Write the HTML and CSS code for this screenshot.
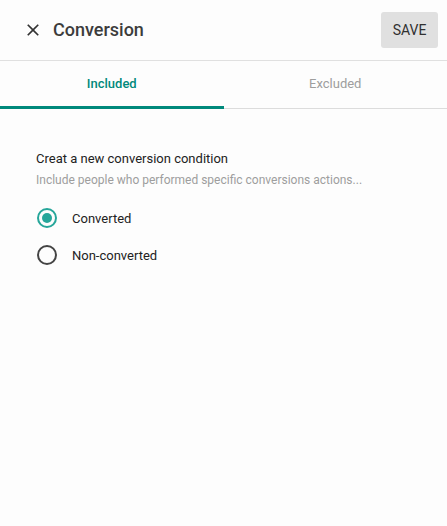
FILE: index.html
```html
<!DOCTYPE html>
<html>
<head>
<meta charset="utf-8">
<link rel="stylesheet" href="styles.css">
</head>
<body>
<div class="app">
  <header class="header">
    <button class="close" aria-label="Close">
      <svg viewBox="0 0 24 24" width="20" height="20"><path d="M19 6.41L17.59 5 12 10.59 6.41 5 5 6.41 10.59 12 5 17.59 6.41 19 12 13.41 17.59 19 19 17.59 13.41 12z" fill="#333"/></svg>
    </button>
    <h1 class="title">Conversion</h1>
    <button class="save">SAVE</button>
  </header>
  <nav class="tabs">
    <div class="tab active">Included</div>
    <div class="tab">Excluded</div>
  </nav>
  <main class="content">
    <div class="heading">Creat a new conversion condition</div>
    <div class="sub">Include people who performed specific conversions actions...</div>
    <div class="radios">
      <label class="radio checked"><span class="circle"></span><span class="label">Converted</span></label>
      <label class="radio"><span class="circle"></span><span class="label">Non-converted</span></label>
    </div>
  </main>
</div>
</body>
</html>
```

FILE: styles.css
```css
html, body {
  margin: 0;
  padding: 0;
  background: #fdfdfd;
  font-family: Roboto, "Liberation Sans", Arial, sans-serif;
}
.app {
  width: 447px;
  height: 526px;
  background: #fdfdfd;
}
.header {
  height: 60px;
  border-bottom: 1px solid #e0e0e0;
  display: flex;
  align-items: center;
  padding: 0 9px 0 23px;
  box-sizing: content-box;
}
.close {
  width: 20px;
  height: 20px;
  padding: 0;
  border: 0;
  background: none;
  display: flex;
  align-items: center;
  justify-content: center;
}
.title {
  margin: 0 0 0 10px;
  font-size: 18px;
  font-weight: 500;
  color: #3c3c3c;
  flex: 1;
  position: relative;
  top: -1px;
}
.save {
  width: 57px;
  height: 36px;
  border: 0;
  border-radius: 3px;
  background: #e0e0e0;
  color: #303030;
  font-family: Roboto, "Liberation Sans", Arial, sans-serif;
  font-size: 14px;
  font-weight: 400;
  padding: 0;
  margin-top: -1px;
}
.tabs {
  display: flex;
  height: 47px;
  border-bottom: 1px solid #dcdcdc;
}
.tab {
  flex: 1;
  display: flex;
  align-items: center;
  justify-content: center;
  font-size: 13px;
  font-weight: 400;
  color: #9e9e9e;
  position: relative;
  padding-bottom: 2px;
}
.tab.active {
  color: #00897b;
  font-weight: 500;
}
.tab.active::after {
  content: "";
  position: absolute;
  left: 0;
  right: 0;
  bottom: -1px;
  height: 3px;
  background: #00897b;
}
.content {
  padding: 42px 36px 0;
}
.heading {
  font-size: 13px;
  color: #222;
  line-height: 16px;
}
.sub {
  font-size: 12px;
  color: #9e9e9e;
  line-height: 16px;
  margin-top: 5px;
}
.radios {
  display: flex;
  flex-direction: column;
  gap: 17px;
  margin-top: 20px;
}
.radio {
  display: flex;
  align-items: center;
  height: 20px;
}
.circle {
  width: 20px;
  height: 20px;
  box-sizing: border-box;
  border: 2px solid #444;
  border-radius: 50%;
  margin-left: 1px;
  position: relative;
}
.radio.checked .circle {
  border-color: #26a69a;
}
.radio.checked .circle::after {
  content: "";
  position: absolute;
  left: 3px;
  top: 3px;
  width: 10px;
  height: 10px;
  border-radius: 50%;
  background: #26a69a;
}
.label {
  margin-left: 15px;
  font-size: 13px;
  color: #222;
}
```
